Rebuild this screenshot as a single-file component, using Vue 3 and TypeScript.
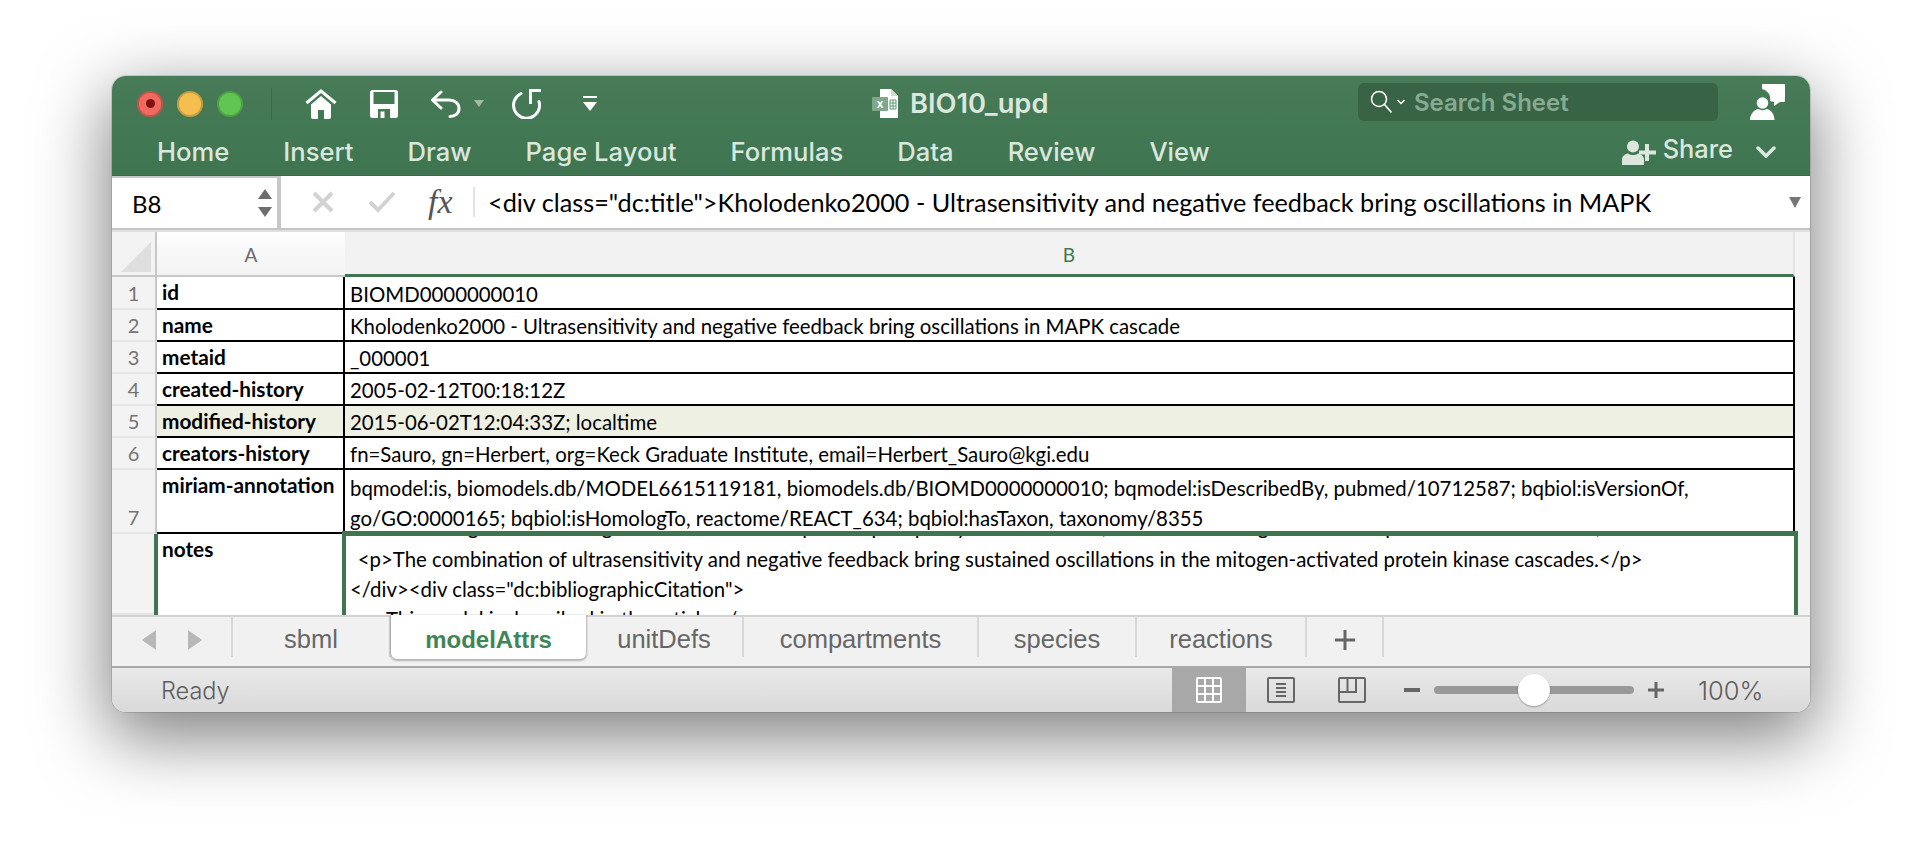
<script setup lang="ts">
type SheetRow = {
  num: string
  label: string
  lines: string[]
  height: number
  tinted?: boolean
}

const ribbonTabs = ['Home', 'Insert', 'Draw', 'Page Layout', 'Formulas', 'Data', 'Review', 'View']

const rows: SheetRow[] = [
  { num: '1', label: 'id', lines: ['BIOMD0000000010'], height: 33 },
  {
    num: '2',
    label: 'name',
    lines: ['Kholodenko2000 - Ultrasensitivity and negative feedback bring oscillations in MAPK cascade'],
    height: 32
  },
  { num: '3', label: 'metaid', lines: ['_000001'], height: 32 },
  { num: '4', label: 'created-history', lines: ['2005-02-12T00:18:12Z'], height: 32 },
  { num: '5', label: 'modified-history', lines: ['2015-06-02T12:04:33Z; localtime'], height: 32, tinted: true },
  {
    num: '6',
    label: 'creators-history',
    lines: ['fn=Sauro, gn=Herbert, org=Keck Graduate Institute, email=Herbert_Sauro@kgi.edu'],
    height: 32
  },
  {
    num: '7',
    label: 'miriam-annotation',
    lines: [
      'bqmodel:is, biomodels.db/MODEL6615119181, biomodels.db/BIOMD0000000010; bqmodel:isDescribedBy, pubmed/10712587; bqbiol:isVersionOf,',
      'go/GO:0000165; bqbiol:isHomologTo, reactome/REACT_634; bqbiol:hasTaxon, taxonomy/8355'
    ],
    height: 64
  }
]

const notesLines = [
  'Functional organization of signal transduction into protein phosphorylation cascades, such as the mitogen-activated protein kinase cascades,',
  '\u00a0\u2009<p>The combination of ultrasensitivity and negative feedback bring sustained oscillations in the mitogen-activated protein kinase cascades.</p>',
  '</div><div class="dc:bibliographicCitation">',
  '\u00a0\u00a0\u00a0\u00a0\u00a0\u00a0\u00a0This model is described in the article:</'
]

const sheetTabs = [
  { name: 'sbml', width: 158 },
  { name: 'modelAttrs', width: 195, active: true },
  { name: 'unitDefs', width: 158 },
  { name: 'compartments', width: 235 },
  { name: 'species', width: 158 },
  { name: 'reactions', width: 170 }
]
</script>

<template>
  <div class="page">
    <div class="window">
      <header class="ribbon">
        <div class="title-row">
          <div class="lights">
            <span class="light red"><i></i></span>
            <span class="light yellow"></span>
            <span class="light green"></span>
          </div>
          <span class="title-sep"></span>
          <svg class="ic-home" viewBox="0 0 32 30" fill="#fff">
            <path d="M1.500 14 16 2l14.500 12" fill="none" stroke="#fff" stroke-width="3" />
            <path d="M6 15.500 16 7l10 8.500V28a2 2 0 0 1-2 2h-5v-9h-6v9H8a2 2 0 0 1-2-2z" />
          </svg>
          <svg class="ic-save" viewBox="0 0 28 28">
            <rect width="28" height="28" rx="2.500" fill="#fff" />
            <rect x="3.500" y="2" width="21" height="12" fill="#437a52" />
            <rect x="8" y="19" width="12" height="9" fill="#437a52" />
            <rect x="10.500" y="21.500" width="4" height="6.500" fill="#fff" />
          </svg>
          <svg class="ic-undo" viewBox="0 0 32 28" fill="none" stroke="#fff" stroke-width="3" stroke-linecap="round">
            <path d="M11 2 2.500 10l8.500 8" stroke-linejoin="round" />
            <path d="M3 10h16c6 0 10 3.500 10 8.500S25 26.500 20 26.500" />
          </svg>
          <span class="undo-caret"></span>
          <svg class="ic-redo" viewBox="0 0 31 31" fill="none" stroke="#fff" stroke-width="3">
            <path d="M19.500 16V2.500H30" />
            <path d="M10 5.500a13 13 0 1 0 18 8" stroke-linecap="round" />
          </svg>
          <svg class="ic-custom" viewBox="0 0 14 16" fill="#fff">
            <rect width="14" height="2" />
            <path d="M0 6h14l-7 9z" />
          </svg>

          <div class="doc-title">
            <svg class="ic-xls" viewBox="0 0 26 29">
              <path d="M8 0h11l7 7v22H8z" fill="#fff" />
              <path d="M19 0l7 7h-7z" fill="#cfdcd2" />
              <rect y="8" width="16" height="14" rx="1" fill="#7fa88b" />
              <text x="8" y="19" text-anchor="middle" class="xls-x">x</text>
              <path d="M18 11h6v9h-6zM18 14h6M18 17h6M21 11v9" fill="none" stroke="#5f9a70" stroke-width="1" />
            </svg>
            <span>BIO10_upd</span>
          </div>

          <div class="search">
            <svg class="ic-search" viewBox="0 0 23 24" fill="none" stroke="#fff" stroke-width="1.600">
              <circle cx="9" cy="9" r="7.500" />
              <path d="m14.500 14.500 7 8" />
            </svg>
            <svg class="ic-search-caret" viewBox="0 0 8 6" fill="none" stroke="#fff" stroke-width="1.500">
              <path d="m.5 1 3.500 3.500L7.500 1" />
            </svg>
            <span>Search Sheet</span>
          </div>

          <svg class="ic-comment" viewBox="0 0 35 36" fill="#fff">
            <path d="M12 0h22a1 1 0 0 1 1 1v16a1 1 0 0 1-1 1h-4l-6 4v-4l-4-1a10 10 0 0 0-8-12z" />
            <circle cx="12.500" cy="19" r="5.800" />
            <path d="M0 36c0-6 4-10 8-11 3 1.500 6 1.500 9 0 4 1 7.500 5 7.500 11z" />
          </svg>
        </div>

        <div class="tab-row">
          <nav class="tabs">
            <span v-for="tab in ribbonTabs" :key="tab">{{ tab }}</span>
          </nav>
          <div class="share">
            <svg class="ic-share" viewBox="0 0 34 25" fill="#dbe7de">
              <circle cx="11" cy="6.500" r="6" />
              <path d="M0 25v-5c0-4 3-6 6-6.500 3 2 7 2 10 0 3 .5 6 2.500 6 6.500v5z" />
              <path d="M23 4h4v6.500h7v4h-7V21h-4v-6.500h-6v-4h6z" />
            </svg>
            <span>Share</span>
            <svg class="ic-chevron" viewBox="0 0 20 12" fill="none" stroke="#dbe7de" stroke-width="3.500" stroke-linecap="round">
              <path d="m2 2 8 8 8-8" />
            </svg>
          </div>
        </div>
      </header>

      <div class="formula-bar">
        <div class="name-box">
          <span>B8</span>
          <div class="spinner">
            <i class="up"></i>
            <i class="down"></i>
          </div>
        </div>
        <svg class="ic-x" viewBox="0 0 22 22" fill="none" stroke="#d2d2d2" stroke-width="4">
          <path d="m2 2 18 18M20 2 2 20" />
        </svg>
        <svg class="ic-check" viewBox="0 0 28 22" fill="none" stroke="#d2d2d2" stroke-width="4">
          <path d="m2 11 8 8L26 2" />
        </svg>
        <span class="fx">fx</span>
        <span class="fx-sep"></span>
        <div class="formula">&lt;div class="dc:title"&gt;Kholodenko2000 - Ultrasensitivity and negative feedback bring oscillations in MAPK</div>
        <i class="formula-caret"></i>
      </div>

      <div class="sheet">
        <div class="col-head">
          <div class="corner"><i></i></div>
          <div class="col-a">A</div>
          <div class="col-b">B</div>
        </div>

        <div v-for="row in rows" :key="row.num" class="row" :style="{ height: row.height + 'px' }">
          <div class="row-num">{{ row.num }}</div>
          <div class="cell-a" :class="{ tinted: row.tinted }">{{ row.label }}</div>
          <div class="cell-b" :class="{ tinted: row.tinted }">
            <div v-for="line in row.lines" :key="line" class="line">{{ line }}</div>
          </div>
        </div>

        <div class="row notes-row">
          <div class="row-num"></div>
          <div class="cell-a notes-a">notes</div>
          <div class="notes-b">
            <div class="notes-text">
              <div v-for="line in notesLines" :key="line" class="line">{{ line }}</div>
            </div>
          </div>
        </div>
      </div>

      <div class="sheet-tabs">
        <div class="tab-nav">
          <i class="nav-left"></i>
          <i class="nav-right"></i>
        </div>
        <div
          v-for="tab in sheetTabs"
          :key="tab.name"
          class="sheet-tab"
          :class="{ active: tab.active }"
          :style="{ width: tab.width + 'px' }"
        >
          {{ tab.name }}
        </div>
        <div class="sheet-add">
          <svg viewBox="0 0 20 20" fill="#666">
            <path d="M8.500 0h3v8.500H20v3h-8.500V20h-3v-8.500H0v-3h8.500z" />
          </svg>
        </div>
      </div>

      <footer class="status">
        <span class="ready">Ready</span>
        <div class="view-btn active">
          <svg viewBox="0 0 26 26" fill="none" stroke="#fff" stroke-width="2">
            <rect x="1" y="1" width="24" height="24" rx="1" />
            <path d="M9 1v24M17 1v24M1 9h24M1 17h24" />
          </svg>
        </div>
        <svg class="view-ic page-ic" viewBox="0 0 28 26" fill="none" stroke="#666" stroke-width="2">
          <rect x="1" y="1" width="26" height="24" rx="1" />
          <path d="M9 7h10M9 11h10M9 15h10M9 19h10" stroke-width="1.800" />
        </svg>
        <svg class="view-ic break-ic" viewBox="0 0 28 26" fill="none" stroke="#666" stroke-width="2">
          <rect x="1" y="1" width="26" height="24" rx="1" />
          <path d="M1 15h17V1M9.500 1v14" />
        </svg>
        <span class="zoom-minus"></span>
        <div class="slider"><span class="knob"></span></div>
        <svg class="zoom-plus" viewBox="0 0 16 16" fill="#666">
          <path d="M6.500 0h3v6.500H16v3H9.500V16h-3V9.500H0v-3h6.500z" />
        </svg>
        <span class="zoom-value">100%</span>
      </footer>
    </div>
  </div>
</template>

<style>
html,
body {
  margin: 0;
  background: #fff;
  overflow: hidden;
}
</style>

<style scoped>
.page {
  width: 1922px;
  height: 860px;
  padding: 76px 0 0 112px;
  box-sizing: border-box;
}

.window {
  width: 1698px;
  height: 636px;
  border-radius: 14px;
  overflow: hidden;
  display: flex;
  flex-direction: column;
  background: #fff;
  box-shadow:
    0 22px 70px 4px rgba(0, 0, 0, 0.5),
    0 0 0 1px rgba(0, 0, 0, 0.12);
}

/* ribbon */
.ribbon {
  height: 100px;
  flex: none;
  background: linear-gradient(#487b57, #3e7550);
  border-bottom: 1px solid #39694a;
  box-sizing: border-box;
  font-family: Inter, "Liberation Sans", sans-serif;
}

.title-row {
  height: 55px;
  display: flex;
  align-items: center;
  position: relative;
}

.lights {
  display: flex;
  gap: 14px;
  margin-left: 25px;
}

.light {
  width: 26px;
  height: 26px;
  border-radius: 50%;
  box-sizing: border-box;
  border: 2px solid rgba(0, 0, 0, 0.18);
  display: flex;
  align-items: center;
  justify-content: center;
}

.light i {
  width: 9px;
  height: 9px;
  border-radius: 50%;
  background: #7f1210;
}

.red {
  background: #f06a5f;
}

.yellow {
  background: #f5bf4f;
}

.green {
  background: #61c554;
}

.title-sep {
  width: 1px;
  height: 32px;
  margin-left: 28px;
  background: #3a6a4a;
}

.ic-home {
  width: 32px;
  height: 30px;
  margin-left: 33px;
}

.ic-save {
  width: 28px;
  height: 28px;
  margin-left: 33px;
}

.ic-undo {
  width: 32px;
  height: 28px;
  margin-left: 32px;
}

.undo-caret {
  width: 0;
  height: 0;
  margin-left: 12px;
  border-left: 5px solid transparent;
  border-right: 5px solid transparent;
  border-top: 7px solid #9dbba6;
}

.ic-redo {
  width: 31px;
  height: 31px;
  margin-left: 27px;
}

.ic-custom {
  width: 14px;
  height: 16px;
  margin-left: 41px;
}

.doc-title {
  position: absolute;
  left: 760px;
  top: 11px;
  display: flex;
  align-items: center;
  gap: 12px;
  color: #dbe7de;
  font-size: 27.300px;
  font-weight: 600;
}

.ic-xls {
  width: 26px;
  height: 29px;
}

.xls-x {
  font-family: "Liberation Sans", sans-serif;
  font-size: 12px;
  fill: #fff;
}

.search {
  position: absolute;
  left: 1246px;
  top: 7px;
  width: 360px;
  height: 38px;
  border-radius: 6px;
  background: #386445;
  display: flex;
  align-items: center;
  color: #86ab92;
  font-size: 24px;
  font-weight: 600;
}

.ic-search {
  width: 23px;
  height: 24px;
  margin-left: 12px;
}

.ic-search-caret {
  width: 8px;
  height: 6px;
  margin-left: 4px;
}

.search span {
  margin-left: 9px;
}

.ic-comment {
  position: absolute;
  left: 1638px;
  top: 8px;
  width: 35px;
  height: 36px;
}

.tab-row {
  height: 44px;
  display: flex;
  align-items: center;
  justify-content: space-between;
}

.tabs {
  display: flex;
  gap: 54px;
  margin-left: 45px;
  margin-top: -4px;
  color: #dbe7de;
  font-size: 25.600px;
  font-weight: 500;
}

.share {
  display: flex;
  align-items: center;
  color: #dbe7de;
  font-size: 25.400px;
  font-weight: 500;
  margin-right: 34px;
  margin-top: -10px;
}

.ic-share {
  width: 34px;
  height: 25px;
  margin-top: 8px;
  margin-right: 7px;
}

.ic-chevron {
  width: 20px;
  height: 12px;
  margin-left: 23px;
  margin-top: 8px;
}

/* formula bar */
.formula-bar {
  height: 54px;
  flex: none;
  box-sizing: border-box;
  display: flex;
  align-items: center;
  background: #fff;
  border-bottom: 2px solid #c4c4c4;
  font-family: Lato, "Liberation Sans", sans-serif;
  color: #000;
}

.name-box {
  width: 169px;
  height: 52px;
  box-sizing: border-box;
  border-top: 2px solid #c8c8c8;
  border-right: 4px solid #c8c8c8;
  display: flex;
  align-items: center;
  justify-content: space-between;
  padding: 0 5px 0 20px;
  font-size: 24px;
}

.spinner {
  display: flex;
  flex-direction: column;
  gap: 8px;
}

.spinner i {
  display: block;
  width: 0;
  height: 0;
  border-left: 7px solid transparent;
  border-right: 7px solid transparent;
}

.spinner .up {
  border-bottom: 10px solid #6e6e6e;
}

.spinner .down {
  border-top: 10px solid #6e6e6e;
}

.ic-x {
  width: 22px;
  height: 22px;
  margin-left: 31px;
}

.ic-check {
  width: 28px;
  height: 22px;
  margin-left: 34px;
}

.fx {
  margin-left: 32px;
  width: 30px;
  font-family: "Liberation Serif", serif;
  font-style: italic;
  font-size: 34px;
  color: #555;
}

.fx-sep {
  width: 2px;
  height: 30px;
  margin-left: 15px;
  background: #e2e2e2;
}

.formula {
  margin-left: 13px;
  font-size: 25.250px;
  white-space: nowrap;
  flex: 1;
}

.formula-caret {
  width: 0;
  height: 0;
  margin-right: 9px;
  border-left: 6px solid transparent;
  border-right: 6px solid transparent;
  border-top: 11px solid #777;
}

/* sheet */
.sheet {
  height: 385px;
  flex: none;
  overflow: hidden;
  background: #f3f3f3;
  border-top: 2px solid #e0e0e0;
  box-sizing: border-box;
  font-family: Lato, "Liberation Sans", sans-serif;
  color: #000;
}

.col-head {
  height: 45px;
  box-sizing: border-box;
  display: grid;
  grid-template-columns: 45px 188px 1450px 1fr;
  color: #6a6a6a;
  font-size: 19px;
}

.corner {
  position: relative;
  border-right: 2px solid #c8c8c8;
  border-bottom: 2px solid #c8c8c8;
}

.corner i {
  position: absolute;
  right: 4px;
  bottom: 3px;
  width: 0;
  height: 0;
  border-left: 30px solid transparent;
  border-bottom: 30px solid #dedede;
}

.col-a,
.col-b {
  display: flex;
  align-items: center;
  justify-content: center;
  box-sizing: border-box;
  padding-top: 2px;
}

.col-a {
  background: linear-gradient(#fdfdfd, #f3f3f3);
  border-bottom: 2px solid #c8c8c8;
}

.col-b {
  background: #f2f2f2;
  color: #3f7a52;
  border-bottom: 3px solid #3f7551;
  border-right: 2px solid #e4e4e4;
}

.row {
  display: grid;
  grid-template-columns: 45px 188px 1450px 1fr;
  grid-template-rows: minmax(0, 1fr);
  box-sizing: border-box;
  font-size: 20.400px;
  line-height: 30px;
}

.row-num {
  display: flex;
  align-items: flex-end;
  justify-content: center;
  color: #747474;
  font-size: 20px;
  line-height: 30px;
  padding-top: 2px;
  border-right: 2px solid #c8c8c8;
  border-bottom: 2px solid #e4e4e4;
  box-sizing: border-box;
}

.cell-a {
  background: #fff;
  padding-left: 5px;
  font-size: 20.800px;
  font-weight: 700;
  border-bottom: 2px solid #000;
  border-right: 2px solid #000;
  box-sizing: border-box;
  white-space: nowrap;
  overflow: hidden;
}

.cell-b {
  background: #fff;
  padding-left: 5px;
  border-bottom: 2px solid #000;
  border-right: 2px solid #000;
  box-sizing: border-box;
  display: flex;
  flex-direction: column;
  justify-content: flex-end;
  white-space: nowrap;
}

.tinted {
  background: #edf0e2;
}

.notes-row {
  height: 81px;
}

.notes-a {
  margin-left: -3px;
  padding-left: 4px;
  border-left: 4px solid #3f7551;
  border-bottom: none;
  border-right: none;
}

.notes-b {
  margin-left: -3px;
  margin-top: -3px;
  border: 4px solid #3f7551;
  border-top-width: 5px;
  border-bottom: none;
  background: #fff;
  overflow: hidden;
  white-space: nowrap;
  width: 1456px;
  box-sizing: border-box;
  padding-left: 4px;
}

.notes-text {
  margin-top: -23px;
}

/* only the descenders of the first scrolled-off line stay visible */
.notes-text .line:first-child {
  transform: translateY(-3px);
}

/* sheet tabs */
.sheet-tabs {
  height: 51px;
  flex: none;
  box-sizing: border-box;
  display: flex;
  align-items: flex-start;
  background: #f1f1f1;
  border-top: 2px solid #d2d2d2;
  font-family: "Liberation Sans", sans-serif;
  font-size: 25.500px;
  color: #666;
}

.tab-nav {
  width: 121px;
  height: 40px;
  box-sizing: border-box;
  display: flex;
  align-items: center;
  padding: 5px 0 0 30px;
  gap: 32px;
  border-right: 2px solid #d8d8d8;
}

.nav-left,
.nav-right {
  width: 0;
  height: 0;
  border-top: 10px solid transparent;
  border-bottom: 10px solid transparent;
}

.nav-left {
  border-right: 14px solid #b8b8b8;
}

.nav-right {
  border-left: 14px solid #b8b8b8;
}

.sheet-tab {
  height: 40px;
  padding-top: 5px;
  box-sizing: border-box;
  display: flex;
  align-items: center;
  justify-content: center;
  border-right: 2px solid #d8d8d8;
}

.sheet-tab.active {
  height: 44px;
  margin-top: -2px;
  padding-top: 5px;
  background: #fff;
  color: #3f8555;
  font-size: 24px;
  font-weight: 700;
  border: none;
  border-radius: 0 0 6px 6px;
  box-shadow: 0 1px 2px 1px rgba(0, 0, 0, 0.25);
  position: relative;
}

.sheet-add {
  width: 77px;
  height: 40px;
  padding-top: 5px;
  box-sizing: border-box;
  display: flex;
  align-items: center;
  justify-content: center;
  border-right: 2px solid #d8d8d8;
}

.sheet-add svg {
  width: 20px;
  height: 20px;
}

/* status bar */
.status {
  flex: 1;
  display: flex;
  align-items: center;
  box-sizing: border-box;
  background: linear-gradient(#e9e9e9, #d9d9d9);
  border-top: 2px solid #a9a9a9;
  font-family: Inter, "Liberation Sans", sans-serif;
  color: #5c5c5c;
  font-size: 23.500px;
}

.ready {
  margin-left: 49px;
  width: 1011px;
  font-weight: 300;
}

.view-btn {
  width: 74px;
  height: 100%;
  background: #a8a8a8;
  display: flex;
  align-items: center;
  justify-content: center;
}

.view-btn svg {
  width: 26px;
  height: 26px;
}

.view-ic {
  width: 28px;
  height: 26px;
}

.page-ic {
  margin-left: 21px;
}

.break-ic {
  margin-left: 43px;
}

.zoom-minus {
  width: 16px;
  height: 4px;
  margin-left: 38px;
  background: #666;
}

.slider {
  width: 200px;
  height: 8px;
  margin-left: 14px;
  border-radius: 4px;
  background: #999;
  position: relative;
}

.knob {
  position: absolute;
  left: 84px;
  top: -12px;
  width: 32px;
  height: 32px;
  border-radius: 50%;
  background: #fff;
  box-shadow: 0 1px 2px rgba(0, 0, 0, 0.3);
}

.zoom-plus {
  width: 16px;
  height: 16px;
  margin-left: 14px;
}

.zoom-value {
  margin-left: 34px;
  font-size: 25.500px;
  font-weight: 300;
}

.line {
  height: 30px;
  line-height: 32px;
}
</style>
